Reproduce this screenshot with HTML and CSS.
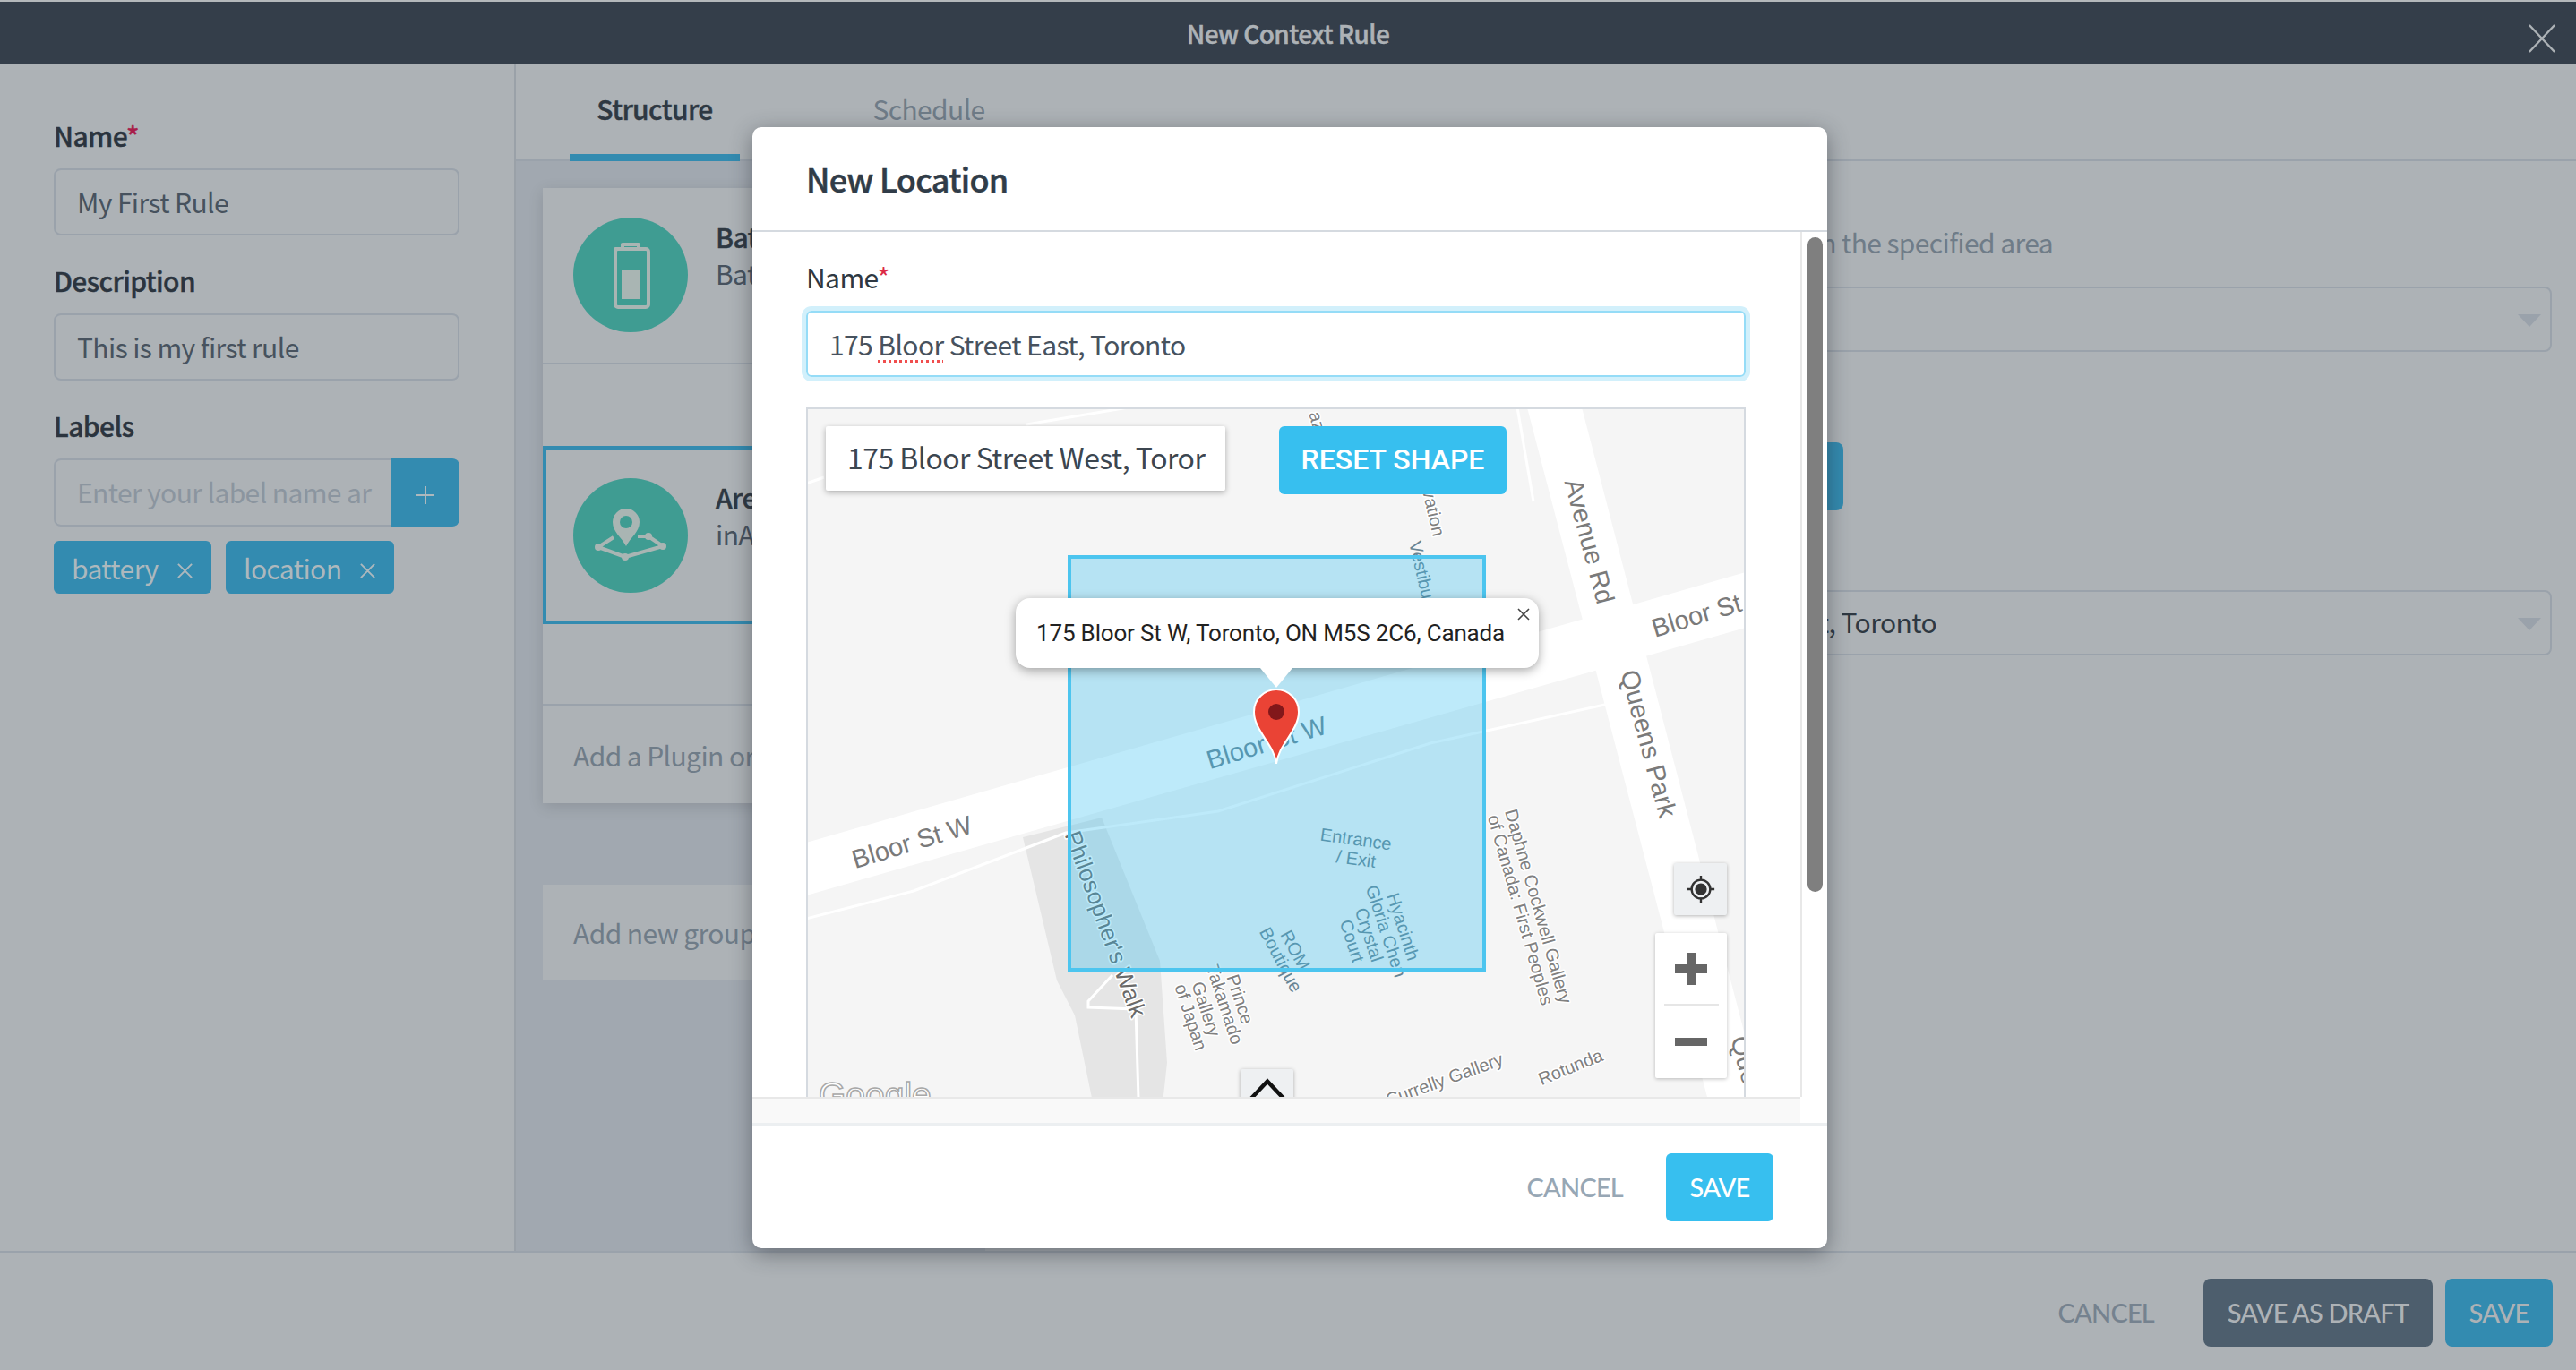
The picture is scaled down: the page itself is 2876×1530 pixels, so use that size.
FILE: index.html
```html
<!DOCTYPE html>
<html lang="en">
<head>
<meta charset="utf-8">
<title>New Context Rule</title>
<link rel="stylesheet" href="styles.css">
</head>
<body>
<div class="app">
  <header class="topbar">
    <h1 class="topbar-title">New Context Rule</h1>
    <svg class="topbar-close" viewBox="0 0 32 34"><path d="M1 1 31 33M31 1 1 33"/></svg>
  </header>
  <main class="main">
    <aside class="side">
      <div class="side-label">Name<span class="req">*</span></div>
      <div class="side-input">My First Rule</div>
      <div class="side-label">Description</div>
      <div class="side-input">This is my first rule</div>
      <div class="side-label">Labels</div>
      <div class="label-row">
        <div class="label-input">Enter your label name ar</div>
        <div class="label-add"><svg viewBox="0 0 24 24"><path d="M12 2v20M2 12h20"/></svg></div>
      </div>
      <div class="tags">
        <span class="tag">battery<svg viewBox="0 0 20 20"><path d="M2 2 18 18M18 2 2 18"/></svg></span>
        <span class="tag tag-location">location<svg viewBox="0 0 20 20"><path d="M2 2 18 18M18 2 2 18"/></svg></span>
      </div>
    </aside>
    <section class="content">
      <nav class="tabs">
        <div class="tab tab-active">Structure</div>
        <div class="tab">Schedule</div>
      </nav>
      <div class="work">
        <div class="cards">
          <div class="card-group">
            <div class="rule">
              <div class="rule-icon">
                <svg viewBox="0 0 128 128"><path class="ic-line" d="M47 35h34a3 3 0 0 1 3 3v59a3 3 0 0 1-3 3H50a3 3 0 0 1-3-3V38a3 3 0 0 1 3-3zM55 35v-5h18v5"/><rect class="ic-fill" x="54" y="58" width="21" height="33"/></svg>
              </div>
              <div class="rule-text"><div class="rule-name">Battery</div><div class="rule-desc">Battery level</div></div>
            </div>
            <div class="spacer"></div>
            <div class="rule rule-selected">
              <div class="rule-icon">
                <svg viewBox="0 0 128 128"><path class="ic-line" d="M28 77 45 66M72 65H84L100 76 58 88 28 77"/><circle class="ic-node" cx="28" cy="77" r="4"/><circle class="ic-node" cx="58" cy="88" r="4"/><circle class="ic-node" cx="100" cy="76" r="4"/><circle class="ic-node" cx="84" cy="65" r="4"/><path class="ic-pin" d="M59 76C54 66 44 60 44 49a15 15 0 0 1 30 0C74 60 64 66 59 76z"/><circle class="ic-hole" cx="59" cy="49" r="7"/></svg>
              </div>
              <div class="rule-text"><div class="rule-name">Area</div><div class="rule-desc">inArea</div></div>
            </div>
            <div class="spacer"></div>
            <div class="add-row">Add a Plugin or</div>
          </div>
          <div class="add-group">Add new group</div>
        </div>
        <div class="detail">
          <div class="detail-desc">Triggers when the device is within the specified area</div>
          <div class="select"><span class="select-value"></span><i class="caret"></i></div>
          <div class="detail-btn"></div>
          <div class="select select-second"><span class="select-value">175 Bloor Street East, Toronto</span><i class="caret"></i></div>
        </div>
      </div>
    </section>
  </main>
  <footer class="bottombar">
    <span class="btn-text">CANCEL</span>
    <span class="btn btn-draft">SAVE AS DRAFT</span>
    <span class="btn btn-save">SAVE</span>
  </footer>

  <div class="modal">
    <div class="modal-head">New Location</div>
    <div class="modal-mid">
      <div class="modal-left">
        <div class="modal-scroll">
          <div class="field-label">Name<span class="req-bright">*</span></div>
          <div class="field-input">175 <span class="misspelled">Bloor</span> Street East, Toronto</div>
          <div class="map">
            <svg class="map-art" viewBox="902 457 1045 800">
              <rect x="902" y="457" width="1045" height="800" fill="#f5f5f5"/>
              <path class="road-thin" d="M1146 474 1260 455M900 540 920 533"/>
              <path fill="#fff" d="M900 941 1949 639V701L900 1000z"/>
              <path fill="#fff" d="M1705 455H1766L1966 1225H1906z"/>
              <path class="road-thin" d="M1694 455 1712 560"/>
              <path fill="#e5e5e5" d="M1142 935 1230 913 1295 1073 1303 1187 1295 1260H1226L1200 1134 1180 1095z"/>
              <path class="road-thin" d="M900 1026 1020 995 1190 930 1360 906 1597 830 1796 786"/>
              <path class="road-thin" d="M1242 1089 1215 1118 1215 1125 1268 1127 1272 1260"/>
              <text class="lbl lbl-road" transform="translate(1021 950) rotate(-17)" text-anchor="middle">Bloor St W</text>
              <text class="lbl lbl-road" transform="translate(1897 697) rotate(-17)" text-anchor="middle">Bloor St</text>
              <text class="lbl lbl-road lbl-tint" transform="translate(1417 839) rotate(-17)" text-anchor="middle">Bloor St W</text>
              <text class="lbl lbl-road" transform="translate(1765 607) rotate(75)" text-anchor="middle">Avenue Rd</text>
              <text class="lbl lbl-road" transform="translate(1831 833) rotate(75)" text-anchor="middle">Queens Park</text>
              <text class="lbl lbl-road" transform="translate(1932 1160) rotate(75)">Queen's Park</text>
              <text class="lbl lbl-walk" transform="translate(1226 1035) rotate(70)" text-anchor="middle">Philosopher's Walk</text>
              <text class="lbl lbl-poi" transform="translate(1464 472) rotate(75)" text-anchor="middle">az</text>
              <text class="lbl lbl-poi" transform="translate(1600 600) rotate(77)" text-anchor="end">Conservation</text>
              <text class="lbl lbl-poi lbl-tint" transform="translate(1573 606) rotate(77)">Vestibule</text>
              <g class="lbl lbl-poi lbl-tint">
                <text transform="translate(1513 944) rotate(8)" text-anchor="middle">Entrance</text>
                <text transform="translate(1513 966) rotate(8)" text-anchor="middle">/ Exit</text>
                <text transform="translate(1560 1037) rotate(72)" text-anchor="middle">Hyacinth</text>
                <text transform="translate(1541 1042) rotate(72)" text-anchor="middle">Gloria Chen</text>
                <text transform="translate(1522 1046) rotate(72)" text-anchor="middle">Crystal</text>
                <text transform="translate(1503 1053) rotate(72)" text-anchor="middle">Court</text>
                <text transform="translate(1440 1064) rotate(62)" text-anchor="middle">ROM</text>
                <text transform="translate(1424 1075) rotate(62)" text-anchor="middle">Boutique</text>
              </g>
              <g class="lbl lbl-poi">
                <text transform="translate(1378 1118) rotate(72)" text-anchor="middle">Prince</text>
                <text transform="translate(1361 1124) rotate(72)" text-anchor="middle">Takamado</text>
                <text transform="translate(1340 1129) rotate(72)" text-anchor="middle">Gallery</text>
                <text transform="translate(1323 1138) rotate(72)" text-anchor="middle">of Japan</text>
                <text transform="translate(1711 1014) rotate(74)" text-anchor="middle">Daphne Cockwell Gallery</text>
                <text transform="translate(1691 1018) rotate(74)" text-anchor="middle">of Canada: First Peoples</text>
                <text transform="translate(1615 1212) rotate(-20)" text-anchor="middle">Currelly Gallery</text>
                <text transform="translate(1756 1198) rotate(-22)" text-anchor="middle">Rotunda</text>
              </g>
              <text class="google" x="914" y="1236">Google</text>
            </svg>
            <div class="map-search">175 Bloor Street West, Toror</div>
            <div class="map-reset">RESET SHAPE</div>
            <div class="map-shape"></div>
            <div class="info">
              <span>175 Bloor St W, Toronto, ON M5S 2C6, Canada</span>
              <svg class="info-close" viewBox="0 0 14 14"><path d="M1 1 13 13M13 1 1 13"/></svg>
            </div>
            <div class="info-tail"></div>
            <svg class="pin" viewBox="0 0 54 86"><path d="M27 85C25 64 2 48 2 27a25 25 0 0 1 50 0C52 48 29 64 27 85z" fill="#ea4335" stroke="#fff" stroke-width="2"/><circle cx="27" cy="27" r="9" fill="#82171a"/></svg>
            <div class="map-ctl map-locate">
              <svg viewBox="0 0 36 36"><circle cx="18" cy="18" r="11" fill="none" stroke="#333" stroke-width="2.5"/><circle cx="18" cy="18" r="7" fill="#333"/><path d="M18 2v6M18 28v6M2 18h6M28 18h6" stroke="#333" stroke-width="2.5"/></svg>
            </div>
            <div class="map-zoom">
              <div class="zoom-btn"><svg viewBox="0 0 36 36"><path d="M13 0h10v13h13v10H23v13H13V23H0V13h13z" fill="#666"/></svg></div>
              <div class="zoom-sep"></div>
              <div class="zoom-btn"><svg viewBox="0 0 36 36"><path d="M0 14h36v9H0z" fill="#666"/></svg></div>
            </div>
            <div class="map-ctl map-tilt">
              <svg viewBox="0 0 36 36"><path d="M3 20 18 4 33 20 18 36z" fill="none" stroke="#111" stroke-width="4"/></svg>
            </div>
          </div>
        </div>
        <div class="modal-strip"></div>
      </div>
      <div class="scrollbar"><div class="scroll-thumb"></div></div>
    </div>
    <div class="modal-rule"></div>
    <div class="modal-foot">
      <span class="modal-cancel">CANCEL</span>
      <span class="modal-save">SAVE</span>
    </div>
  </div>
</div>
</body>
</html>
```
FILE: styles.css
```css
* { box-sizing: border-box; }
html, body { margin: 0; padding: 0; }
body {
  width: 2876px;
  height: 1530px;
  overflow: hidden;
  background: #adb2b6;
  font-family: "Noto Sans CJK SC", "Source Sans Pro", "Noto Sans", sans-serif;
  font-size: 30px;
  line-height: 40px;
  letter-spacing: -.6px;
  color: #2e3842;
}
.app { position: relative; width: 2876px; height: 1530px; display: flex; flex-direction: column; }

/* top bar */
.topbar {
  height: 72px;
  flex: none;
  background: #343e4a;
  border-top: 2px solid #b4b8bb;
  display: flex;
  align-items: center;
  justify-content: center;
  position: relative;
}
.topbar-title { margin: 0; font-size: 28px; font-weight: 500; -webkit-text-stroke: .5px #adb2b6; color: #adb2b6; line-height: 38px; }
.topbar-close { position: absolute; right: 22px; top: 25px; width: 32px; height: 32px; fill: none; stroke: #adb2b6; stroke-width: 2.5; }

/* main */
.main { flex: none; height: 1325px; display: flex; }
.side { width: 576px; flex: none; padding: 59px 61px 0 60px; background: #adb2b6; border-right: 2px solid #9aa1a8; }
.side-label { font-weight: 500; -webkit-text-stroke: .4px; line-height: 40px; margin-bottom: 17px; color: #2b343e; }
.req { color: #a81d4a; }
.side-input {
  height: 75px;
  margin-bottom: 30px;
  padding: 0 24px;
  border: 2px solid #9aa2ab;
  border-radius: 8px;
  line-height: 70px;
  color: #47525e;
}
.label-row { display: flex; height: 76px; }
.label-input {
  flex: 1;
  min-width: 0;
  overflow: hidden;
  white-space: nowrap;
  padding: 0 0 0 24px;
  border: 2px solid #9aa2ab;
  border-right: 0;
  border-radius: 8px 0 0 8px;
  line-height: 70px;
  color: #8b959f;
}
.label-add {
  width: 77px;
  flex: none;
  background: #338bb0;
  border-radius: 0 8px 8px 0;
  display: flex;
  align-items: center;
  justify-content: center;
}
.label-add svg { width: 24px; height: 24px; fill: none; stroke: #adb8bd; stroke-width: 2; margin-top: 6px; }
.tags { display: flex; gap: 16px; margin-top: 16px; }
.tag {
  height: 59px;
  width: 176px;
  padding: 0 20px;
  background: #338bb0;
  border-radius: 6px;
  color: #adb8bd;
  line-height: 56px;
  display: flex;
  align-items: center;
  justify-content: space-between;
}
.tag-location { width: 188px; }
.tag svg { width: 19px; height: 19px; fill: none; stroke: #adb8bd; stroke-width: 2; margin-top: 8px; flex: none; }

/* content */
.content { flex: 1; min-width: 0; display: flex; flex-direction: column; }
.tabs { height: 108px; flex: none; padding-left: 60px; display: flex; gap: 116px; border-bottom: 2px solid #9aa2ab; }
.tab { width: 190px; padding-top: 29px; text-align: center; color: #6f7c88; }
.tab-active { color: #2e3842; font-weight: 500; -webkit-text-stroke: .4px; height: 108px; border-bottom: 8px solid #338bb0; }
.work { flex: 1; min-height: 0; display: flex; }
.cards { width: 524px; flex: none; padding: 30px 0 0 30px; background: #a1a8b0; }
.card-group { background: #adb2b6; box-shadow: 0 4px 16px rgba(0, 0, 0, .12); }
.rule { height: 197px; display: flex; padding: 33px 0 0 34px; border-bottom: 2px solid #9aa2ab; }
.rule-selected { height: 199px; padding: 32px 0 0 30px; border: 4px solid #338bb0; }
.spacer { height: 91px; }
.rule-selected + .spacer { border-bottom: 2px solid #9aa2ab; }
.rule-icon { width: 128px; height: 128px; border-radius: 50%; background: #3f9c92; flex: none; }
.rule-icon svg { display: block; width: 128px; height: 128px; }
.ic-line { fill: none; stroke: #a9b5b3; stroke-width: 4; stroke-linejoin: round; }
.ic-fill { fill: #a9b5b3; }
.ic-node { fill: #a9b5b3; }
.ic-pin { fill: #a9b5b3; }
.ic-hole { fill: #3f9c92; }
.rule-text { padding: 1px 0 0 31px; white-space: nowrap; }
.rule-name { font-weight: 500; -webkit-text-stroke: .4px; line-height: 40px; }
.rule-desc { line-height: 40px; margin-top: 1px; color: #47525e; }
.add-row { height: 109px; padding: 35px 0 0 34px; color: #6f7c88; white-space: nowrap; }
.add-group { height: 107px; margin-top: 91px; padding: 33px 0 0 34px; background: #adb2b6; color: #6f7c88; white-space: nowrap; }
.detail { flex: 1; min-width: 0; background: #adb2b6; padding: 70px 27px 0 0; }
.detail-desc { width: 1192px; line-height: 40px; text-align: right; color: #6f7c88; white-space: nowrap; }
.select {
  height: 73px;
  margin-top: 30px;
  border: 2px solid #9aa2ab;
  border-radius: 8px;
  position: relative;
  line-height: 66px;
}
.select-value { display: block; width: 1060px; min-height: 66px; text-align: right; color: #2e3842; white-space: nowrap; }
.caret {
  position: absolute;
  right: 10px;
  top: 29px;
  width: 0;
  height: 0;
  border-left: 13px solid transparent;
  border-right: 13px solid transparent;
  border-top: 14px solid #9aa2ab;
}
.detail-btn { width: 958px; height: 76px; margin-top: 101px; background: #338bb0; border-radius: 0 8px 8px 0; }
.select-second { margin-top: 89px; }

/* bottom */
.bottombar {
  flex: 1;
  min-height: 0;
  border-top: 2px solid #9aa2ab;
  padding: 29px 26px 0 0;
  display: flex;
  justify-content: flex-end;
  align-items: flex-start;
  font-family: Lato, "Noto Sans", sans-serif;
  font-size: 29px;
  font-weight: 500;
  letter-spacing: -.8px;
}
.btn { height: 76px; border-radius: 8px; display: flex; align-items: center; justify-content: center; color: #adb2b6; }
.btn-text { height: 76px; margin-right: 55px; display: flex; align-items: center; color: #75828f; }
.btn-draft { width: 256px; background: #4d5e6d; }
.btn-save { width: 120px; margin-left: 14px; background: #338bb0; }

/* modal */
.modal {
  position: absolute;
  left: 840px;
  top: 142px;
  width: 1200px;
  height: 1252px;
  background: #fff;
  border-radius: 10px;
  box-shadow: 0 6px 24px rgba(30, 36, 44, .45);
  display: flex;
  flex-direction: column;
  overflow: hidden;
}
.modal-head {
  height: 117px;
  flex: none;
  padding: 37px 0 0 60px;
  font-size: 36px;
  font-weight: 500;
  -webkit-text-stroke: .5px;
  line-height: 40px;
  letter-spacing: -.7px;
  color: #303c48;
  border-bottom: 2px solid #d5dae0;
}
.modal-mid { height: 995px; flex: none; display: flex; }
.modal-left { width: 1170px; flex: none; display: flex; flex-direction: column; }
.modal-scroll { height: 966px; flex: none; overflow: hidden; padding: 30px 0 0 60px; }
.modal-strip { flex: 1; background: #f9f9f9; border-top: 2px solid #e8e8e8; }
.scrollbar { flex: 1; border-left: 2px solid #e8e8e8; padding: 6px 5px 0 6px; height: 966px; }
.scroll-thumb { width: 17px; height: 731px; background: #7f7f7f; border-radius: 9px; }
.field-label { line-height: 40px; color: #2e3842; }
.req-bright { color: #dc2b45; }
.field-input {
  width: 1049px;
  height: 74px;
  margin-top: 18px;
  padding-left: 24px;
  border: 2px solid #95dcf7;
  border-radius: 6px;
  box-shadow: 0 0 0 5px #d2f0fb;
  line-height: 70px;
  color: #47525e;
  white-space: nowrap;
}
.misspelled { text-decoration: underline dotted #f04e4e 3px; text-underline-offset: 5px; }
.map {
  position: relative;
  width: 1049px;
  height: 804px;
  margin-top: 34px;
  border: 2px solid #d5dae0;
  border-bottom: 0;
  background: #f5f5f5;
}
.map-art { position: absolute; left: 0; top: 0; width: 1045px; height: 800px; overflow: hidden; letter-spacing: 0; }
.road-thin { fill: none; stroke: #fff; stroke-width: 3; }
.lbl { font-family: "Liberation Sans", Arial, sans-serif; paint-order: stroke; stroke: #fff; stroke-width: 3px; stroke-linejoin: round; }
.lbl-road { font-size: 29px; fill: #7a7a7a; }
.lbl-walk { font-size: 26px; fill: #6a6a6a; }
.lbl-poi { font-size: 20px; fill: #808080; }
.lbl-tint, .lbl-tint text { fill: #688493; stroke: none; }
.google { font-family: "Liberation Sans", Arial, sans-serif; font-size: 39px; fill: #fff; stroke: #a8a8a8; stroke-width: 1.5px; }
.map-search {
  position: absolute;
  left: 20px;
  top: 19px;
  width: 446px;
  height: 72px;
  padding-left: 24px;
  background: #fff;
  border-radius: 2px;
  box-shadow: 0 2px 6px rgba(0, 0, 0, .3);
  font-size: 32px;
  letter-spacing: -.53px;
  line-height: 68px;
  color: #3c4650;
  white-space: nowrap;
  overflow: hidden;
}
.map-reset {
  position: absolute;
  left: 526px;
  top: 19px;
  width: 254px;
  height: 76px;
  background: #37bfef;
  border-radius: 6px;
  color: #fff;
  font-family: Roboto, sans-serif;
  font-weight: 500;
  font-size: 32px;
  letter-spacing: 0;
  line-height: 74px;
  text-align: center;
}
.map-shape {
  position: absolute;
  left: 290px;
  top: 163px;
  width: 467px;
  height: 465px;
  background: rgba(56, 190, 240, .33);
  border: 4px solid #4cc5ef;
}
.info {
  position: absolute;
  left: 232px;
  top: 211px;
  width: 584px;
  height: 78px;
  padding-left: 23px;
  background: #fff;
  border-radius: 16px;
  box-shadow: 0 3px 12px rgba(0, 0, 0, .35);
  font-family: Roboto, sans-serif;
  font-size: 26px;
  letter-spacing: -.17px;
  line-height: 78px;
  color: #222;
  white-space: nowrap;
}
.info-close { position: absolute; right: 10px; top: 11px; width: 14px; height: 14px; fill: none; stroke: #444; stroke-width: 1.6; }
.info-tail {
  position: absolute;
  left: 505px;
  top: 289px;
  width: 0;
  height: 0;
  border-left: 18px solid transparent;
  border-right: 18px solid transparent;
  border-top: 22px solid #fff;
}
.pin { position: absolute; left: 496px; top: 311px; width: 54px; height: 86px; }
.map-ctl {
  position: absolute;
  width: 59px;
  background: #eef0f2;
  border-radius: 2px;
  box-shadow: 0 1px 4px rgba(0, 0, 0, .3);
  display: flex;
  justify-content: center;
}
.map-locate { left: 967px; top: 507px; height: 58px; align-items: center; }
.map-locate svg { width: 34px; height: 34px; }
.map-tilt { left: 483px; top: 737px; height: 60px; padding-top: 9px; }
.map-tilt svg { width: 40px; height: 40px; flex: none; }
.map-zoom {
  position: absolute;
  left: 946px;
  top: 585px;
  width: 80px;
  height: 162px;
  background: #fff;
  border-radius: 2px;
  box-shadow: 0 1px 4px rgba(0, 0, 0, .25);
  display: flex;
  flex-direction: column;
  align-items: center;
}
.zoom-btn { height: 79px; display: flex; align-items: center; justify-content: center; }
.zoom-btn svg { width: 36px; height: 36px; }
.zoom-sep { width: 61px; height: 2px; background: #e6e6e6; }
.modal-rule { height: 4px; flex: none; background: #eceff1; }
.modal-foot { flex: 1; display: flex; justify-content: flex-end; align-items: flex-start; padding: 30px 60px 0 0; font-family: Lato, sans-serif; font-size: 29px; font-weight: 500; letter-spacing: -.8px; }
.modal-cancel { height: 76px; line-height: 76px; color: #97a7b5; margin-right: 48px; }
.modal-save { width: 120px; height: 76px; line-height: 76px; text-align: center; background: #37bfef; border-radius: 6px; color: #fff; }
```
